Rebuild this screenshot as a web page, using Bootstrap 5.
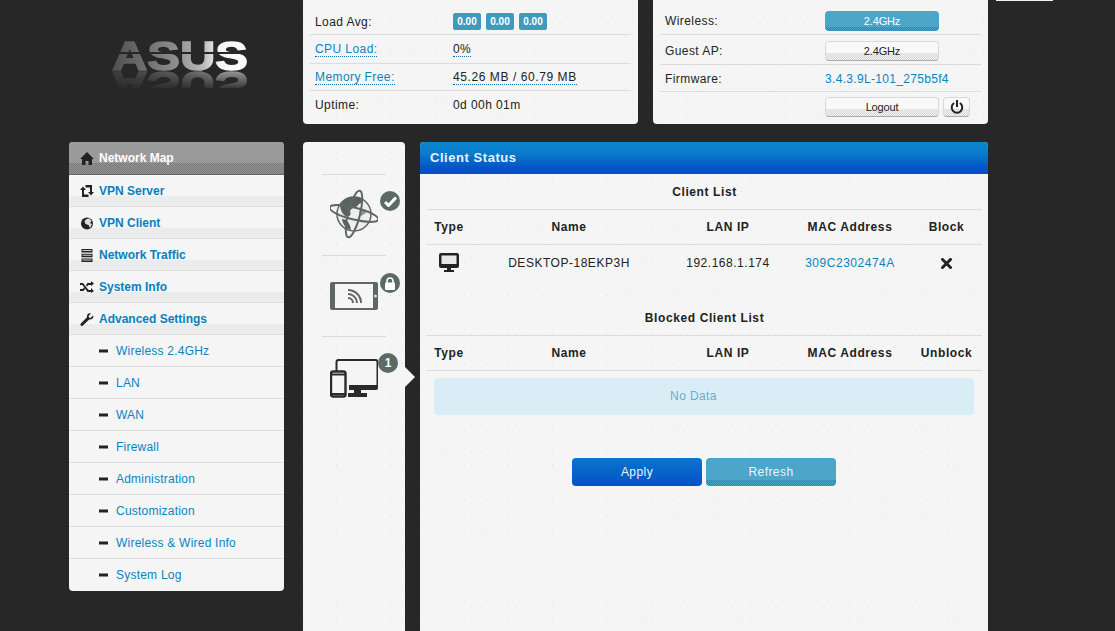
<!DOCTYPE html>
<html lang="en">
<head>
<meta charset="utf-8">
<title>Client Status</title>
<link rel="stylesheet" href="https://cdn.jsdelivr.net/npm/bootstrap@5.3.0/dist/css/bootstrap.min.css">
<style>
html,body{height:631px;overflow:hidden}
body{background:#272727;font-family:"Liberation Sans",Arial,sans-serif;font-size:12px;color:#222;position:relative}
a{color:#0a84bd;text-decoration:none}
.speck{background-color:#f5f5f5;background-image:radial-gradient(circle,#e3e3e3 .6px,transparent .9px),radial-gradient(circle,#e8e8e8 .6px,transparent .9px);background-size:9px 13px,11px 17px;background-position:2px 4px,6px 9px}
.page-wrap{padding-left:69px;width:988px}
.top-row{height:124px;margin-bottom:18px}
.logo-col{width:215px;margin-right:19px;flex:none}
.logo-art{display:block;-webkit-box-reflect:below -22px linear-gradient(transparent 62%,rgba(255,255,255,.5) 85%)}
.stat-panel{width:335px;height:124px;border-radius:0 0 4px 4px;padding:0 7px;flex:none}
.stat-panel + .stat-panel{margin-left:15px}
.stat-row{display:flex;align-items:center;border-bottom:1px solid #dcdcdc;padding-left:5px;letter-spacing:.42px;font-size:12px}
.stat-row:last-child{border-bottom:0}
.h35{height:35px}.h29{height:29px}.h27{height:27px}.h30{height:30px}.h33{height:33px}
.pt-load{padding-top:9px}.pt-wifi{padding-top:8px}.pt-guest{padding-top:2px}.pt-fw{padding-top:2px}.pb-up{padding-bottom:6px}.pb-out{padding-bottom:3px}
.lab1{width:138px;flex:none}.lab2{width:160px;flex:none}
.tip{color:inherit;border-bottom:1px dotted #0a6fa8;padding-bottom:0;line-height:14px}
.wide-val{letter-spacing:.58px}
.fw-val{letter-spacing:.32px}
a.tip{color:#0a84bd}
.load-tag{background:#3f9ac0;border-radius:2px;color:#fff;font-size:10px;font-weight:700;padding:3px 0 0;width:28px;height:17px;margin-right:5px;letter-spacing:0;text-align:center;line-height:12px}
.mini-btn{padding:0;border-radius:4px;font-size:11px;line-height:18px;letter-spacing:-.15px;color:#222;width:114px;height:20px;border:1px solid #d8d8d8;border-bottom-color:#a8a8a8;background:linear-gradient(#f9f9f9 60%,transparent 60%),conic-gradient(#d6d6d6 25%,#f3f3f3 0 50%,#d6d6d6 0 75%,#f3f3f3 0) 0 0/2px 2px}
.mini-btn:hover{color:#222;border-color:#d8d8d8}
.mini-info{background:linear-gradient(#4ba6c9 78%,transparent 78%),conic-gradient(#2a84b5 25%,#4ba6c9 0 50%,#2a84b5 0 75%,#4ba6c9 0) 0 0/2px 2px;border:0;color:#fff}
.power-btn{width:27px;margin-left:4px;display:flex;align-items:center;justify-content:center}
.side-menu{width:215px;height:449px;margin-right:19px;border-radius:4px;overflow:hidden;flex:none;background:#f5f5f5}
.menu-line{display:flex;align-items:center;height:32px;border-bottom:1px solid #dedede;padding-left:11px;position:relative}
.menu-line:last-child{border-bottom:0}
.menu-line svg{flex:none}
.menu-main{font-weight:700;font-size:12px;background:linear-gradient(#f5f5f5 68%,transparent 68%),conic-gradient(#e4e4e4 25%,#f3f3f3 0 50%,#e4e4e4 0 75%,#f3f3f3 0) 0 0/2px 2px;padding-top:1px}
.menu-main a{color:#0a7fc0;margin-left:5px}
.menu-head{height:33px;font-weight:700;color:#fff;background:linear-gradient(#9a9a9a 66%,transparent 66%),conic-gradient(#7a7a7a 25%,#939393 0 50%,#7a7a7a 0 75%,#939393 0) 0 0/2px 2px;border-bottom:1px solid #666;letter-spacing:0}
.menu-head span{margin-left:5px}
.menu-sub{padding-left:30px;letter-spacing:.22px;padding-top:1px}
.menu-sub:last-child{padding-top:0}
.menu-sub a{margin-left:8px;color:#0a84bd}
.route-col{width:102px;height:489px;margin-right:15px;border-radius:4px 4px 0 0;padding:32px 19px 0;flex:none;position:relative}
.route-item{height:81px;border-top:1px solid #dcdcdc;position:relative;display:flex;justify-content:center;padding-top:14px}
.route-badge{position:absolute;width:20px;height:20px;border-radius:50%;background:#5b6a64;color:#fff;font-weight:700;font-size:12px;line-height:20px;text-align:center;display:flex;align-items:center;justify-content:center}
.badge-a{left:58px;top:16px}.badge-b{left:58px;top:17px}.badge-c{left:56px;top:16px}
.route-arrow{position:absolute;left:102px;top:225px;width:0;height:0;border-top:10px solid transparent;border-bottom:10px solid transparent;border-left:10px solid #f5f5f5}
.art-tablet{margin-top:12px}.art-devices{margin-top:8px}
.main-col{width:568px;height:489px;border-radius:4px 4px 0 0;overflow:hidden;flex:none}
.main-title{height:32px;background:linear-gradient(#0a86cd,#0a7ccb 35%,#0455c6 80%,#034fc4);color:#e8f3ff;font-weight:700;font-size:13px;letter-spacing:.55px;line-height:32px;padding-left:10px}
.main-body{padding:0 7px}
.cli-table{--bs-table-bg:transparent;margin:0;table-layout:fixed;width:555px;color:#222}
.cli-table th,.cli-table td{padding:0;border-bottom:1px solid #dcdcdc;text-align:center;vertical-align:middle;font-size:12px;letter-spacing:.5px;box-shadow:none}
.cli-table th{font-weight:700;color:#222;letter-spacing:.6px}
.cap-row th{height:35px;padding-top:1px}
.col-row th{height:35px;padding-top:1px}
.cli-table .data-row td{height:37px;border-bottom:0;letter-spacing:.52px;padding-top:1px}
.cli-table .data-row td.mark-cell{padding-top:0}
.c1{width:44px}.c2{width:196px}.c3{width:122px}.c4{width:122px}.c5{width:71px}
.gap-block{margin-top:19px}
.empty-box{background:#d9edf7;color:#69adcb;border-radius:4px;height:37px;line-height:37px;text-align:center;margin:7px 7px 0 7px;padding-right:21px;letter-spacing:.4px}
.act-row{margin-top:43px;gap:4px}
.act-btn{width:130px;height:28px;padding:0;border:0;border-radius:4px;font-size:12px;line-height:28px;color:#e9f4ff;letter-spacing:.42px}
.act-apply{background:linear-gradient(#0a74cf,#0452c4)}
.act-apply:hover{background:linear-gradient(#0a74cf,#0452c4);color:#e9f4ff}
.act-refresh{background:linear-gradient(#4ba6c9 80%,transparent 80%),conic-gradient(#2a84b5 25%,#4ba6c9 0 50%,#2a84b5 0 75%,#4ba6c9 0) 0 0/2px 2px}
.act-refresh:hover{background:linear-gradient(#4ba6c9 80%,transparent 80%),conic-gradient(#2a84b5 25%,#4ba6c9 0 50%,#2a84b5 0 75%,#4ba6c9 0) 0 0/2px 2px;color:#e9f4ff}
.top-sliver{position:absolute;left:996px;top:0;width:57px;height:1px;background:#f0f0f0}
.brand-word{font-family:"Liberation Sans",sans-serif;font-weight:700;font-size:40px}
</style>
</head>
<body>
<div class="top-sliver"></div>
<div class="page-wrap">
  <div class="d-flex top-row">
    <div class="logo-col">
      <svg class="logo-art" width="215" height="82" viewBox="0 0 215 82" role="img" aria-label="ASUS">
        <defs>
          <linearGradient id="lg" x1="0" x2="1" y1="0" y2="0"><stop offset="0" stop-color="#4f4f4f"/><stop offset=".45" stop-color="#8a8a8a"/><stop offset=".68" stop-color="#bcbcbc"/><stop offset=".78" stop-color="#f4f4f4"/><stop offset="1" stop-color="#ffffff"/></linearGradient>
        </defs>
        <text class="brand-word" x="43" y="70" fill="url(#lg)" stroke="url(#lg)" stroke-width="1.4" textLength="136" lengthAdjust="spacingAndGlyphs">ASUS</text>
        <rect x="40" y="52" width="142" height="2" fill="#272727"/>
      </svg>
    </div>
    <div class="stat-panel speck">
      <div class="stat-row h35 pt-load"><span class="lab1">Load Avg:</span><span class="d-flex"><span class="load-tag">0.00</span><span class="load-tag">0.00</span><span class="load-tag">0.00</span></span></div>
      <div class="stat-row h29"><span class="lab1"><a class="tip" href="#">CPU Load:</a></span><span class="tip">0%</span></div>
      <div class="stat-row h27"><span class="lab1"><a class="tip" href="#">Memory Free:</a></span><span class="tip wide-val">45.26 MB / 60.79 MB</span></div>
      <div class="stat-row h33 pb-up"><span class="lab1">Uptime:</span><span>0d 00h 01m</span></div>
    </div>
    <div class="stat-panel speck">
      <div class="stat-row h35 pt-wifi"><span class="lab2">Wireless:</span><button class="btn mini-btn mini-info" type="button">2.4GHz</button></div>
      <div class="stat-row h30 pt-guest"><span class="lab2">Guest AP:</span><button class="btn mini-btn" type="button">2.4GHz</button></div>
      <div class="stat-row h27 pt-fw"><span class="lab2">Firmware:</span><a class="fw-val" href="#">3.4.3.9L-101_275b5f4</a></div>
      <div class="stat-row h33 pb-out"><span class="lab2"></span><button class="btn mini-btn" type="button">Logout</button><button class="btn mini-btn power-btn" type="button" aria-label="Power"><svg width="14" height="14" viewBox="0 0 14 14"><path d="M4.200 3A5.300 5.300 0 1 0 9.800 3" fill="none" stroke="#222" stroke-width="2"/><rect x="6" y="0" width="2" height="7" fill="#222"/></svg></button></div>
    </div>
  </div>
  <div class="d-flex">
    <nav class="side-menu">
      <div class="menu-line menu-head"><svg width="14" height="13" viewBox="0 0 14 13"><path d="M7 0 14 7h-2v6H8.500V9h-3v4H2V7H0z" fill="#222"/></svg><span>Network Map</span></div>
      <div class="menu-line menu-main"><svg width="14" height="12" viewBox="0 0 14 12"><path d="M0 5 3 1.500 6 5H4v4.500h4.500V12H2V5zM14 7l-3 3.500L8 7h2V2.500H5.500V0H12v7z" fill="#222"/></svg><a href="#">VPN Server</a></div>
      <div class="menu-line menu-main"><svg width="14" height="13" viewBox="0 0 13 13"><circle cx="6.500" cy="6.500" r="6" fill="#222"/><path d="M6 2 9 1.500 11 4 9.500 6 11.500 7 9.500 11 8 8 5 7 4 4z" fill="#ddd"/></svg><a href="#">VPN Client</a></div>
      <div class="menu-line menu-main"><svg width="14" height="13" viewBox="0 0 13 13"><path d="M1 0h11v3.400H1zM1 4.800h11v3.400H1zM1 9.600h11V13H1z" fill="#222"/><path d="M2 1h9v1H2zM2 5.800h9v1H2zM2 10.600h9v1H2z" fill="#ccc"/></svg><a href="#">Network Traffic</a></div>
      <div class="menu-line menu-main"><svg width="14" height="12" viewBox="0 0 14 12"><path d="M0 2h3l5.500 7H11V7l3 3-3 2v-1H7.500L2.500 4H0zM0 8h2.500L4 6.500l1 1.500-1.500 2H0zM7.500 2H11V0l3 2.500L11 5V4H8.500L7 5.500 6 4z" fill="#222"/></svg><a href="#">System Info</a></div>
      <div class="menu-line menu-main"><svg width="14" height="13" viewBox="0 0 13 13"><path d="M12.500 2.500 10 5 8.500 4.500 8 3l2.500-2.500C8.500-.5 6 1 6.500 4.300L.4 10.500a1.400 1.400 0 0 0 2 2L8.700 6.500c3 .5 5-2 3.800-4z" fill="#222"/></svg><a href="#">Advanced Settings</a></div>
      <div class="menu-line menu-sub"><svg width="9" height="4" viewBox="0 0 9 4"><rect width="9" height="3" y=".5" fill="#222"/></svg><a href="#">Wireless 2.4GHz</a></div>
      <div class="menu-line menu-sub"><svg width="9" height="4" viewBox="0 0 9 4"><rect width="9" height="3" y=".5" fill="#222"/></svg><a href="#">LAN</a></div>
      <div class="menu-line menu-sub"><svg width="9" height="4" viewBox="0 0 9 4"><rect width="9" height="3" y=".5" fill="#222"/></svg><a href="#">WAN</a></div>
      <div class="menu-line menu-sub"><svg width="9" height="4" viewBox="0 0 9 4"><rect width="9" height="3" y=".5" fill="#222"/></svg><a href="#">Firewall</a></div>
      <div class="menu-line menu-sub"><svg width="9" height="4" viewBox="0 0 9 4"><rect width="9" height="3" y=".5" fill="#222"/></svg><a href="#">Administration</a></div>
      <div class="menu-line menu-sub"><svg width="9" height="4" viewBox="0 0 9 4"><rect width="9" height="3" y=".5" fill="#222"/></svg><a href="#">Customization</a></div>
      <div class="menu-line menu-sub"><svg width="9" height="4" viewBox="0 0 9 4"><rect width="9" height="3" y=".5" fill="#222"/></svg><a href="#">Wireless &amp; Wired Info</a></div>
      <div class="menu-line menu-sub"><svg width="9" height="4" viewBox="0 0 9 4"><rect width="9" height="3" y=".5" fill="#222"/></svg><a href="#">System Log</a></div>
    </nav>
    <div class="route-col speck">
      <div class="route-item">
        <svg width="48" height="50" viewBox="0 0 48 50">
          <circle cx="24" cy="25" r="17" fill="#eeeeee" stroke="#5f6664" stroke-width="1.500"/>
          <path d="M10 16C14 9 23 7 30 9c4 2 2 5-1 6-2 4-7 3-9 7 2 5-2 7-6 4-2-2-4-6-4-10zM12 30c4 0 8 3 9 11-5-1-8-5-9-11z" fill="#5a6260"/>
          <path d="M29 22l6-1 1 3-5 3z" fill="#8d9391"/>
          <ellipse cx="24" cy="24.500" rx="25" ry="6" transform="rotate(14 24 24.500)" fill="none" stroke="#5f6664" stroke-width="2"/>
          <ellipse cx="24" cy="25" rx="6" ry="24" transform="rotate(14 24 25)" fill="none" stroke="#5f6664" stroke-width="2"/>
        </svg>
        <span class="route-badge badge-a"><svg width="13" height="11" viewBox="0 0 13 11"><path d="M1 6l3.500 3.500L12 1.500" fill="none" stroke="#fff" stroke-width="3"/></svg></span>
      </div>
      <div class="route-item">
        <svg class="art-tablet" width="48" height="30" viewBox="0 0 48 30">
          <rect x="0" y="0" width="48" height="28" rx="2" fill="#5f6664"/>
          <rect x="5" y="2" width="38" height="24" fill="#f5f5f5"/>
          <path d="M18 8a13 13 0 0 1 13 13M18 12a9 9 0 0 1 9 9M18 16a5 5 0 0 1 5 5" fill="none" stroke="#5f6664" stroke-width="2"/>
          <circle cx="45.500" cy="14" r="1.500" fill="#ddd"/>
        </svg>
        <span class="route-badge badge-b"><svg width="12" height="13" viewBox="0 0 12 13"><path d="M3 6V4a3 3 0 0 1 6 0v2" fill="none" stroke="#fff" stroke-width="1.600"/><rect x="1" y="5.500" width="10" height="7.500" rx="1" fill="#fff"/></svg></span>
      </div>
      <div class="route-item">
        <svg class="art-devices" width="48" height="40" viewBox="0 0 48 40">
          <path d="M6.500 12V3a2 2 0 0 1 2-2h37a2 2 0 0 1 2 2v24" fill="none" stroke="#2a2a2a" stroke-width="2"/>
          <path d="M19 26h29v3a2 2 0 0 1-2 2H19z" fill="#2a2a2a"/>
          <path d="M24 31h7v3h6v4H18v-4h6z" fill="#2a2a2a"/>
          <rect x="1" y="12.500" width="14.500" height="25" rx="2" fill="#f5f5f5" stroke="#2a2a2a" stroke-width="2.400"/>
          <path d="M1 15.500h14.500M1 35h14.500" stroke="#2a2a2a" stroke-width="2"/>
        </svg>
        <span class="route-badge badge-c">1</span>
      </div>
      <div class="route-arrow"></div>
    </div>
    <main class="main-col speck">
      <div class="main-title">Client Status</div>
      <div class="main-body">
        <table class="table cli-table">
          <colgroup><col class="c1"><col class="c2"><col class="c3"><col class="c4"><col class="c5"></colgroup>
          <thead>
            <tr class="cap-row"><th colspan="5">Client List</th></tr>
            <tr class="col-row"><th>Type</th><th>Name</th><th>LAN IP</th><th>MAC Address</th><th>Block</th></tr>
          </thead>
          <tbody>
            <tr class="data-row">
              <td class="mark-cell"><svg width="20" height="20" viewBox="0 0 20 20"><path d="M2 0h16a2 2 0 0 1 2 2v11a2 2 0 0 1-2 2h-6v2h3v2H5v-2h3v-2H2a2 2 0 0 1-2-2V2a2 2 0 0 1 2-2z" fill="#222"/><rect x="2.500" y="2.500" width="15" height="8.500" fill="#e8e8e8"/></svg></td>
              <td>DESKTOP-18EKP3H</td><td>192.168.1.174</td><td><a href="#">309C2302474A</a></td>
              <td class="mark-cell"><svg width="11" height="11" viewBox="0 0 11 11"><path d="M1.500 1.500l8 8M9.500 1.500l-8 8" stroke="#222" stroke-width="3" stroke-linecap="square"/></svg></td>
            </tr>
          </tbody>
        </table>
        <table class="table cli-table gap-block">
          <colgroup><col class="c1"><col class="c2"><col class="c3"><col class="c4"><col class="c5"></colgroup>
          <thead>
            <tr class="cap-row"><th colspan="5">Blocked Client List</th></tr>
            <tr class="col-row"><th>Type</th><th>Name</th><th>LAN IP</th><th>MAC Address</th><th>Unblock</th></tr>
          </thead>
        </table>
        <div class="empty-box">No Data</div>
        <div class="d-flex justify-content-center act-row">
          <button class="btn act-btn act-apply" type="button">Apply</button>
          <button class="btn act-btn act-refresh" type="button">Refresh</button>
        </div>
      </div>
    </main>
  </div>
</div>
</body>
</html>
